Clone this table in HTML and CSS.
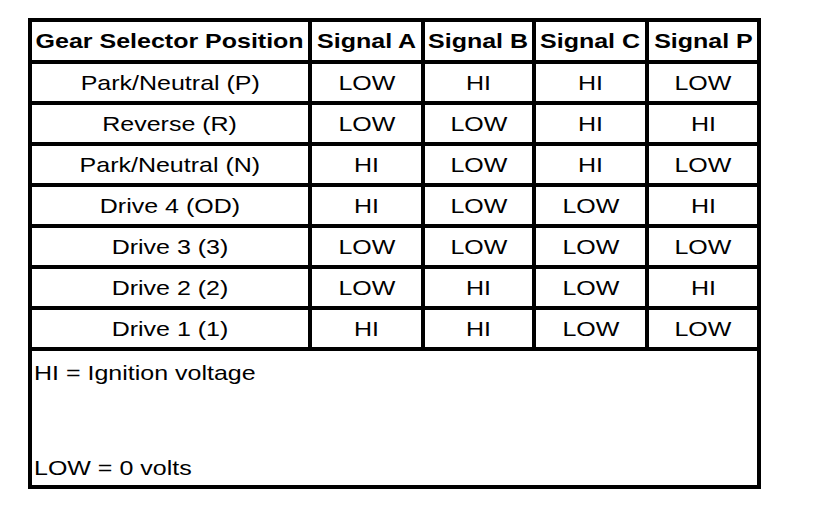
FILE: index.html
```html
<!DOCTYPE html>
<html lang="en">
<head>
<meta charset="utf-8">
<title>Gear Selector Position Signals</title>
<link rel="stylesheet" href="styles.css">
</head>
<body>
<table class="gear">
  <colgroup>
    <col class="c-pos">
    <col class="c-a">
    <col class="c-b">
    <col class="c-c">
    <col class="c-p">
  </colgroup>
  <thead>
    <tr>
      <th><span class="t">Gear Selector Position</span></th>
      <th><span class="t">Signal A</span></th>
      <th><span class="t">Signal B</span></th>
      <th><span class="t">Signal C</span></th>
      <th><span class="t">Signal P</span></th>
    </tr>
  </thead>
  <tbody>
    <tr><td><span class="t">Park/Neutral (P)</span></td><td><span class="t">LOW</span></td><td><span class="t">HI</span></td><td><span class="t">HI</span></td><td><span class="t">LOW</span></td></tr>
    <tr><td><span class="t">Reverse (R)</span></td><td><span class="t">LOW</span></td><td><span class="t">LOW</span></td><td><span class="t">HI</span></td><td><span class="t">HI</span></td></tr>
    <tr><td><span class="t">Park/Neutral (N)</span></td><td><span class="t">HI</span></td><td><span class="t">LOW</span></td><td><span class="t">HI</span></td><td><span class="t">LOW</span></td></tr>
    <tr><td><span class="t">Drive 4 (OD)</span></td><td><span class="t">HI</span></td><td><span class="t">LOW</span></td><td><span class="t">LOW</span></td><td><span class="t">HI</span></td></tr>
    <tr><td><span class="t">Drive 3 (3)</span></td><td><span class="t">LOW</span></td><td><span class="t">LOW</span></td><td><span class="t">LOW</span></td><td><span class="t">LOW</span></td></tr>
    <tr><td><span class="t">Drive 2 (2)</span></td><td><span class="t">LOW</span></td><td><span class="t">HI</span></td><td><span class="t">LOW</span></td><td><span class="t">HI</span></td></tr>
    <tr><td><span class="t">Drive 1 (1)</span></td><td><span class="t">HI</span></td><td><span class="t">HI</span></td><td><span class="t">LOW</span></td><td><span class="t">LOW</span></td></tr>
    <tr class="notes">
      <td colspan="5">
        <div class="notes-box">
          <span class="t">HI = Ignition voltage</span>
          <span class="t">LOW = 0 volts</span>
        </div>
      </td>
    </tr>
  </tbody>
</table>
</body>
</html>
```
FILE: styles.css
```css
html, body {
  background: #fff;
}
body {
  margin: 18px 0 0 28px;
  font-family: "Liberation Sans", Arial, sans-serif;
  color: #000;
}
.gear {
  border-collapse: separate;
  border-spacing: 0;
  border-top: 4px solid #000;
  border-left: 4px solid #000;
  table-layout: fixed;
  width: 733px;
}
.c-pos { width: 280px; }
.c-a { width: 113px; }
.c-b { width: 111px; }
.c-c { width: 113px; }
.c-p { width: 112px; }
th, td {
  padding: 0;
  border-right: 4px solid #000;
  border-bottom: 4px solid #000;
  text-align: center;
  vertical-align: middle;
  font-size: 21px;
  line-height: 37px;
  font-weight: normal;
  white-space: nowrap;
}
th {
  font-weight: bold;
  line-height: 38px;
}
.t {
  display: inline-block;
  transform: scaleX(1.19);
  transform-origin: center;
}
.notes td {
  text-align: left;
  vertical-align: top;
}
.notes-box {
  height: 134px;
  box-sizing: border-box;
  padding: 10px 0 5px 2px;
  display: flex;
  flex-direction: column;
  justify-content: space-between;
  align-items: flex-start;
}
.notes-box .t {
  transform-origin: left center;
  line-height: 24px;
}
```
